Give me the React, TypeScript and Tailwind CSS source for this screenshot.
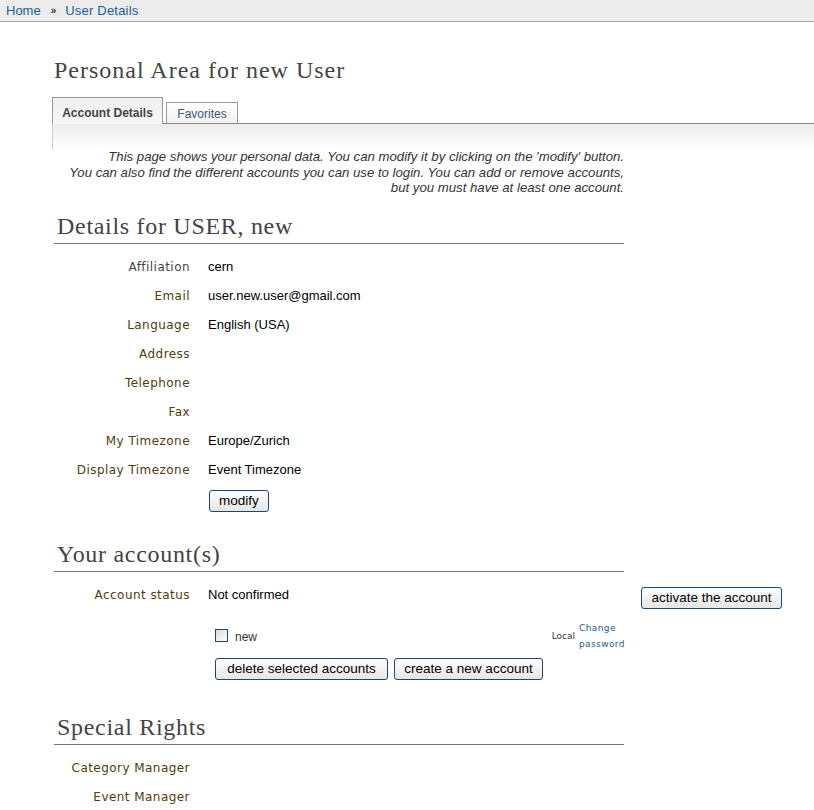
import { useState } from 'react'

type Row = { label: string; value?: string; muted?: boolean }

const DETAILS: Row[] = [
  { label: 'Affiliation', value: 'cern', muted: true },
  { label: 'Email', value: 'user.new.user@gmail.com' },
  { label: 'Language', value: 'English (USA)' },
  { label: 'Address' },
  { label: 'Telephone' },
  { label: 'Fax' },
  { label: 'My Timezone', value: 'Europe/Zurich' },
  { label: 'Display Timezone', value: 'Event Timezone' },
]

const serif = "font-['Liberation_Serif',serif]"
const verdana = "font-['DejaVu_Sans',sans-serif]"
const btn =
  "h-[22px] rounded-[3px] border border-[#1d4575] bg-gradient-to-b from-white to-[#e6e6e6] px-[9px] text-[13.5px] leading-none text-black font-['Liberation_Sans',sans-serif]"

function SectionTitle({ children }: { children: string }) {
  return (
    <h2 className={`${serif} w-[570px] border-b border-[#777] pb-[3px] pl-[3px] text-[24px] leading-[27px] tracking-[0.7px] text-[#444]`}>
      {children}
    </h2>
  )
}

function Field({ label, muted, children }: { label: string; muted?: boolean; children?: React.ReactNode }) {
  return (
    <div className="flex h-[29px] items-center">
      <div className={`${verdana} w-[136px] shrink-0 text-right text-[12px] tracking-[0.45px] ${muted ? 'text-[#444]' : 'text-[#4f3d0c]'}`}>
        {label}
      </div>
      <div className="pl-[18px] text-[13px] text-black">{children}</div>
    </div>
  )
}

export default function App() {
  const [checked, setChecked] = useState(false)
  const [tab, setTab] = useState<'details' | 'favorites'>('details')

  return (
    <div className="min-h-[810px] bg-white font-['Liberation_Sans',sans-serif] text-[12px]">
      <div className="flex h-[22px] items-center border-b border-[#a8a8a8] bg-[#ececec] pl-[6px] text-[13px]">
        <a href="#" className="text-[#1b5e98]">Home</a>
        <span className="ml-[10px] mr-[9px] text-[10px] font-bold text-[#333]">»</span>
        <a href="#" className="text-[#1b5e98] tracking-[0.2px]">User Details</a>
      </div>

      <div className="pl-[54px]">
        <h1 className={`${serif} mt-[35px] text-[24px] leading-[26px] tracking-[1px] text-[#444]`}>
          Personal Area for new User
        </h1>

        <div className="mt-[14px] -ml-[2px] flex items-end gap-[3px] border-b border-[#888]">
          <button
            type="button"
            onClick={() => setTab('details')}
            className={`relative -mb-px h-[27px] w-[111px] border border-b-0 border-[#999] bg-gradient-to-b from-[#f0f0f0] to-[#f6f6f6] pt-[3px] text-[12px] font-bold ${tab === 'details' ? 'text-[#444]' : 'text-[#555]'}`}
          >
            Account Details
          </button>
          <button
            type="button"
            onClick={() => setTab('favorites')}
            className="h-[21px] w-[72px] border border-b-0 border-[#999] bg-gradient-to-b from-white to-[#f2f2f2] pt-[1px] text-[12px] text-[#3d5878]"
          >
            Favorites
          </button>
        </div>

        <div className="-ml-[2px] h-[25px] border-l border-[#ccc] bg-gradient-to-b from-[#ededed] to-white" />

        <div className="w-[570px] text-right text-[13.2px] italic leading-[15.5px] text-[#333]">
          <div>This page shows your personal data. You can modify it by clicking on the 'modify' button.</div>
          <div>You can also find the different accounts you can use to login. You can add or remove accounts,</div>
          <div>but you must have at least one account.</div>
        </div>

        <div className="mt-[17px]">
          <SectionTitle>Details for USER, new</SectionTitle>
        </div>
        <div className="mt-[9px]">
          {DETAILS.map((r) => (
            <Field key={r.label} label={r.label} muted={r.muted}>
              {r.value}
            </Field>
          ))}
          <div className="mt-[5px] pl-[155px]">
            <button type="button" className={btn}>modify</button>
          </div>
        </div>

        <div className="mt-[29px]">
          <SectionTitle>Your account(s)</SectionTitle>
        </div>
        <div className="mt-[9px] flex h-[29px] items-center">
          <div className={`${verdana} w-[136px] shrink-0 text-right text-[12px] tracking-[0.45px] text-[#4f3d0c]`}>Account status</div>
          <div className="w-[433px] pl-[18px] text-[13px] text-black">Not confirmed</div>
          <button type="button" className={`${btn} ml-[18px] mt-[6px] w-[141px] px-0`}>activate the account</button>
        </div>

        <div className="ml-[161px] mt-[10px] flex w-[410px] items-center">
          <label className="flex flex-1 items-center gap-[7px] text-[12px] text-[#333]">
            <input
              type="checkbox"
              checked={checked}
              onChange={(e) => setChecked(e.target.checked)}
              className="h-[13px] w-[13px] appearance-none border border-[#1d4575] bg-gradient-to-br from-[#dcdcdc] to-white checked:bg-[#1d4575]"
            />
            <span className="mt-[3px]">new</span>
          </label>
          <span className={`${verdana} mt-[3px] text-[9px] text-[#333]`}>Local</span>
          <a href="#" className={`${verdana} ml-[4px] w-[46px] text-[9px] leading-[16px] tracking-[0.4px] text-[#1b5e98]`}>
            Change password
          </a>
        </div>

        <div className="ml-[161px] mt-[6px] flex gap-[6px]">
          <button type="button" className={`${btn} w-[173px] px-0`}>delete selected accounts</button>
          <button type="button" className={`${btn} w-[149px] px-0`}>create a new account</button>
        </div>

        <div className="mt-[34px]">
          <SectionTitle>Special Rights</SectionTitle>
        </div>
        <div className="mt-[9px]">
          <Field label="Category Manager" />
          <Field label="Event Manager" />
        </div>
      </div>
    </div>
  )
}
